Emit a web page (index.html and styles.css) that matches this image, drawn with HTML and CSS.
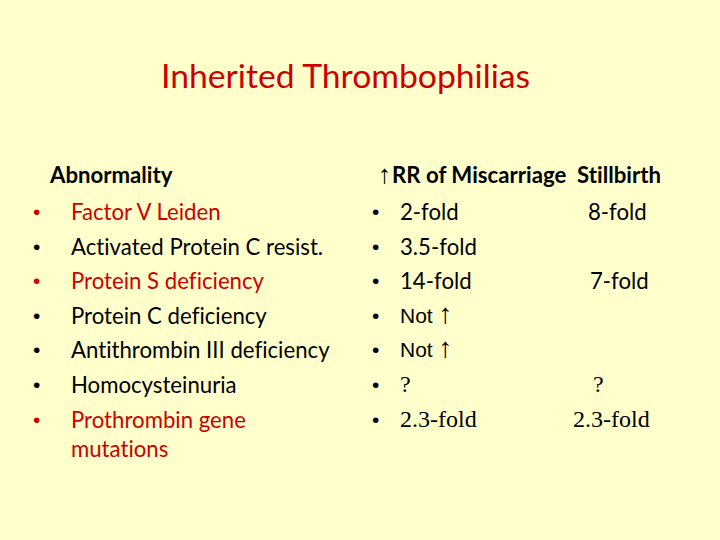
FILE: index.html
```html
<!DOCTYPE html>
<html>
<head>
<meta charset="utf-8">
<link rel="stylesheet" href="styles.css">
</head>
<body>
<div class="slide">
  <h1 class="title">Inherited Thrombophilias</h1>
  <div class="columns">
    <div class="col left">
      <div class="head">Abnormality</div>
      <ul class="list">
        <li class="red"><span class="dot">•</span><span>Factor V Leiden</span></li>
        <li><span class="dot">•</span><span>Activated Protein C resist.</span></li>
        <li class="red"><span class="dot">•</span><span>Protein S deficiency</span></li>
        <li><span class="dot">•</span><span>Protein C deficiency</span></li>
        <li><span class="dot">•</span><span>Antithrombin III deficiency</span></li>
        <li><span class="dot">•</span><span>Homocysteinuria</span></li>
        <li class="red"><span class="dot">•</span><span>Prothrombin gene<br>mutations</span></li>
      </ul>
    </div>
    <div class="col right">
      <div class="head"><span class="arrow">↑</span>RR of Miscarriage&nbsp; Stillbirth</div>
      <ul class="list">
        <li><span class="dot">•</span><span>2-fold</span><span class="sb i15">8-fold</span></li>
        <li><span class="dot">•</span><span>3.5-fold</span><span class="sb"></span></li>
        <li><span class="dot">•</span><span>14-fold</span><span class="sb i17">7-fold</span></li>
        <li><span class="dot">•</span><span class="sans">Not <span class="up">↑</span></span><span class="sb"></span></li>
        <li><span class="dot">•</span><span class="sans">Not <span class="up">↑</span></span><span class="sb"></span></li>
        <li><span class="dot">•</span><span class="serif">?</span><span class="sb serif i20">?</span></li>
        <li><span class="dot">•</span><span class="serif">2.3-fold</span><span class="sb serif">2.3-fold</span></li>
      </ul>
    </div>
  </div>
</div>
</body>
</html>
```
FILE: styles.css
```css
html, body {
  margin: 0;
  padding: 0;
}
body {
  background: #FFFFCC;
  font-family: Lato, "Open Sans", sans-serif;
  font-variant-ligatures: none;
  color: #000;
}
.slide {
  width: 720px;
  height: 540px;
  box-sizing: border-box;
  padding-top: 54px;
}
.title {
  margin: 0 0 0 161px;
  font-size: 33.7px;
  font-weight: normal;
  color: #CC0000;
  line-height: 42px;
}
.columns {
  display: flex;
  margin-top: 64px;
}
.col.left {
  width: 337px;
  padding-left: 33px;
}
.col.right {
  padding-left: 2px;
}
.head {
  font-weight: bold;
  font-size: 22.2px;
  line-height: 30px;
  margin-bottom: 7px;
}
.left .head {
  padding-left: 17px;
}
.right .head {
  padding-left: 6px;
}
.arrow {
  font-family: "Liberation Sans", sans-serif;
  font-weight: normal;
  font-size: 26px;
  line-height: 20px;
  margin-right: 1px;
}
.list {
  list-style: none;
  margin: 0;
  padding: 0;
  font-size: 22.2px;
  line-height: 29px;
}
.list li {
  display: grid;
  margin-bottom: 5.6px;
}
.left .list li {
  grid-template-columns: 38px 1fr;
}
.right .list li {
  grid-template-columns: 28px 173px 1fr;
}
.dot {
  font-family: "Liberation Sans", sans-serif;
  font-size: 21px;
  color: #000;
}
.red {
  color: #CC0000;
}
.red .dot {
  color: #CC0000;
}
.sans {
  font-family: "Liberation Sans", sans-serif;
  font-size: 21px;
}
.up {
  font-size: 28px;
  line-height: 20px;
}
.serif {
  font-family: "Liberation Serif", serif;
  font-size: 24px;
}
.i15 { padding-left: 15px; }
.i17 { padding-left: 17px; }
.i20 { padding-left: 20px; }
```
